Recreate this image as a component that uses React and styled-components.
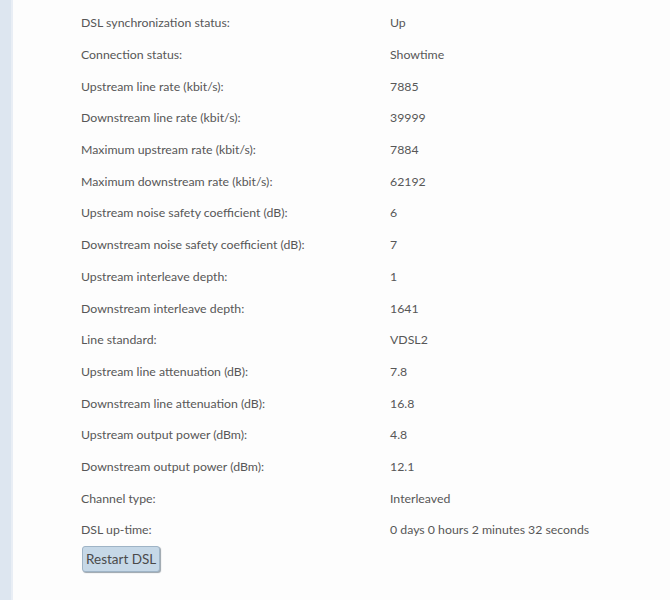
import React from 'react';
import styled, { createGlobalStyle } from 'styled-components';

const GlobalStyle = createGlobalStyle`
  html, body {
    margin: 0;
    padding: 0;
    background: #fdfdfd;
  }
`;

const Page = styled.div`
  display: flex;
  min-height: 600px;
  font-family: "Lato", "Liberation Sans", sans-serif;
  color: #575757;
`;

const SideStrip = styled.div`
  width: 11px;
  background: #dde6f0;
  border-right: 2px solid #e9eef5;
  flex-shrink: 0;
`;

const Content = styled.div`
  flex: 1;
  padding: 7px 0 0 68px;
`;

const StatusTable = styled.div`
  display: grid;
  grid-template-columns: 309px 1fr;
  grid-auto-rows: 31.7px;
  align-items: center;
  font-size: 12.3px;
`;

const Label = styled.div``;
const Value = styled.div``;

const RestartButton = styled.button`
  height: 26px;
  margin-left: 1px;
  padding: 0 3px;
  font-family: inherit;
  font-size: 13.5px;
  color: #4a4a4a;
  background: #c6d8e7;
  border: 1px solid #9fb4c6;
  border-radius: 3px;
  box-shadow: 1px 1px 1px #9aa3ab;
`;

const rows = [
  ['DSL synchronization status:', 'Up'],
  ['Connection status:', 'Showtime'],
  ['Upstream line rate (kbit/s):', '7885'],
  ['Downstream line rate (kbit/s):', '39999'],
  ['Maximum upstream rate (kbit/s):', '7884'],
  ['Maximum downstream rate (kbit/s):', '62192'],
  ['Upstream noise safety coefficient (dB):', '6'],
  ['Downstream noise safety coefficient (dB):', '7'],
  ['Upstream interleave depth:', '1'],
  ['Downstream interleave depth:', '1641'],
  ['Line standard:', 'VDSL2'],
  ['Upstream line attenuation (dB):', '7.8'],
  ['Downstream line attenuation (dB):', '16.8'],
  ['Upstream output power (dBm):', '4.8'],
  ['Downstream output power (dBm):', '12.1'],
  ['Channel type:', 'Interleaved'],
  ['DSL up-time:', '0 days 0 hours 2 minutes 32 seconds'],
];

export default function App() {
  return (
    <Page>
      <GlobalStyle />
      <SideStrip />
      <Content>
        <StatusTable>
          {rows.map(([label, value]) => (
            <React.Fragment key={label}>
              <Label>{label}</Label>
              <Value>{value}</Value>
            </React.Fragment>
          ))}
        </StatusTable>
        <RestartButton>Restart DSL</RestartButton>
      </Content>
    </Page>
  );
}
